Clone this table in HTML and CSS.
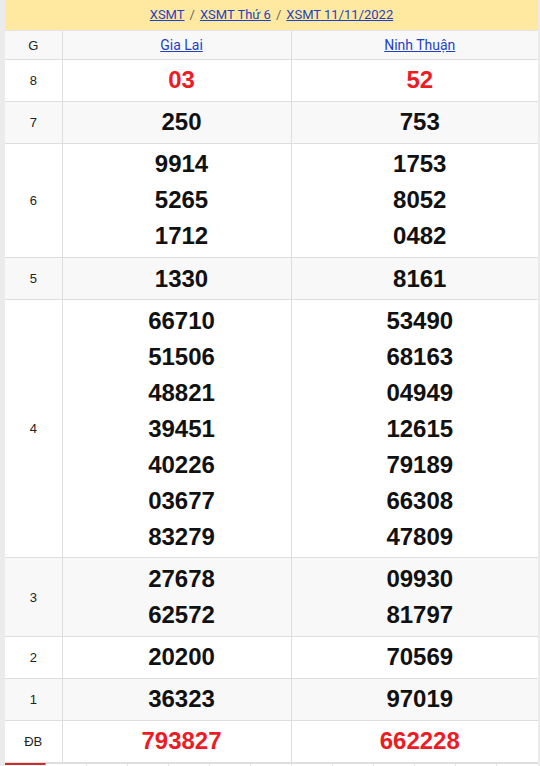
FILE: index.html
```html
<!DOCTYPE html>
<html lang="vi">
<head>
<meta charset="utf-8">
<link rel="stylesheet" href="styles.css">
</head>
<body>
<div class="wrap">
  <div class="crumbs">
    <a href="#">XSMT</a><span class="sep">/</span><a href="#">XSMT Thứ 6</a><span class="sep">/</span><a href="#">XSMT 11/11/2022</a>
  </div>
  <table class="kq">
    <colgroup><col class="c1"><col class="c2"><col class="c3"></colgroup>
    <tr class="head alt">
      <td class="lbl">G</td>
      <td class="prov"><a href="#">Gia Lai</a></td>
      <td class="prov"><a href="#">Ninh Thuận</a></td>
    </tr>
    <tr>
      <td class="lbl">8</td>
      <td class="num red"><div>03</div></td>
      <td class="num red"><div>52</div></td>
    </tr>
    <tr class="alt">
      <td class="lbl">7</td>
      <td class="num"><div>250</div></td>
      <td class="num"><div>753</div></td>
    </tr>
    <tr>
      <td class="lbl">6</td>
      <td class="num"><div>9914</div><div>5265</div><div>1712</div></td>
      <td class="num"><div>1753</div><div>8052</div><div>0482</div></td>
    </tr>
    <tr class="alt">
      <td class="lbl">5</td>
      <td class="num"><div>1330</div></td>
      <td class="num"><div>8161</div></td>
    </tr>
    <tr>
      <td class="lbl">4</td>
      <td class="num"><div>66710</div><div>51506</div><div>48821</div><div>39451</div><div>40226</div><div>03677</div><div>83279</div></td>
      <td class="num"><div>53490</div><div>68163</div><div>04949</div><div>12615</div><div>79189</div><div>66308</div><div>47809</div></td>
    </tr>
    <tr class="alt">
      <td class="lbl">3</td>
      <td class="num"><div>27678</div><div>62572</div></td>
      <td class="num"><div>09930</div><div>81797</div></td>
    </tr>
    <tr>
      <td class="lbl">2</td>
      <td class="num"><div>20200</div></td>
      <td class="num"><div>70569</div></td>
    </tr>
    <tr class="alt">
      <td class="lbl">1</td>
      <td class="num"><div>36323</div></td>
      <td class="num"><div>97019</div></td>
    </tr>
    <tr>
      <td class="lbl">ĐB</td>
      <td class="num red"><div>793827</div></td>
      <td class="num red"><div>662228</div></td>
    </tr>
  </table>
  <div class="tabs">
    <span class="tab on"></span><span class="tab"></span><span class="tab"></span><span class="tab"></span><span class="tab"></span><span class="tab"></span><span class="tab"></span><span class="tab"></span><span class="tab"></span><span class="tab"></span><span class="tab"></span><span class="tab"></span>
  </div>
</div>
</body>
</html>
```
FILE: styles.css
```css
html, body {
  margin: 0;
  padding: 0;
}
body {
  background: #ebebeb;
  font-family: Roboto, "Liberation Sans", Arial, sans-serif;
  overflow: hidden;
}
.wrap {
  width: 533px;
  margin-left: 5px;
  background: #fff;
}
.crumbs {
  height: 30px;
  background: #ffe9a0;
  border-bottom: 1px solid #e4e4e4;
  display: flex;
  justify-content: center;
  align-items: center;
  font-size: 13px;
  line-height: 30px;
}
.crumbs a, .prov a {
  color: #1f3fc4;
  text-decoration: underline;
}
.crumbs .sep {
  color: #666;
  margin: 0 5px;
}
.kq {
  width: 533px;
  border-collapse: collapse;
  table-layout: fixed;
}
.c1 { width: 57px; }
.c2 { width: 229px; }
.c3 { width: 247px; }
.kq td {
  border: 1px solid #dedede;
  text-align: center;
  vertical-align: middle;
}
.kq tr td:first-child { border-left: none; }
.kq tr td:last-child { border-right: none; }
.kq tr:first-child td { border-top: none; }
.alt td { background: #f8f8f8; }
.lbl {
  font-family: "Liberation Sans", Arial, sans-serif;
  font-size: 13px;
  color: #222;
  padding: 0;
}
.head td {
  height: 28px;
  padding: 0;
}
.prov {
  font-size: 14px;
  padding-left: 10px !important;
}
.num {
  padding: 2.3px 0 2.8px 10px;
  font-family: "Liberation Sans", Arial, sans-serif;
  font-weight: bold;
  font-size: 24px;
  line-height: 36px;
  color: #111;
}
.num.red { color: #ed1c24; }
.tabs {
  display: flex;
  border-top: 1px solid #dedede;
  height: 2px;
}
.tab {
  width: 40px;
  border-right: 1px solid #e4e4e4;
}
.tab.on { border-top: 2px solid #d42a2a; margin-top: -1px; }
```
